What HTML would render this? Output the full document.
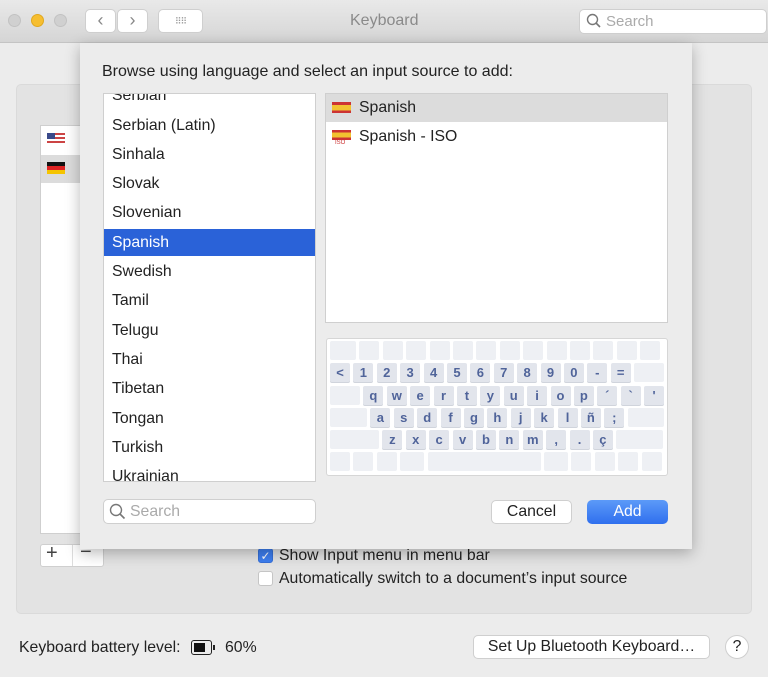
<!DOCTYPE html>
<html><head><meta charset="utf-8"><style>
*{box-sizing:border-box;margin:0;padding:0}
body{width:768px;height:677px;background:#ececec;font-family:"Liberation Sans",sans-serif;position:relative;overflow:hidden;color:#222}
.abs{position:absolute}
.tb{left:0;top:0;width:768px;height:43px;background:linear-gradient(#e9e9e9,#d5d5d5);border-bottom:1px solid #c4c4c4}
.dot{width:13px;height:13px;border-radius:50%;top:14px;background:#d0d0d0;border:1px solid #c2c2c2}
.btn{background:#fff;border:1px solid #cfcfcf;border-radius:5px}
.panel{left:16px;top:84px;width:736px;height:530px;background:#e3e3e3;border-radius:5px;border:1px solid #dadada}
.sheet{left:80px;top:43px;width:612px;height:506px;background:#ececec;box-shadow:0 4px 14px rgba(0,0,0,.28)}
.list{background:#fff;border:1px solid #cfcfcf}
.row{position:absolute;left:0;width:100%;height:27px;line-height:27px;font-size:15.8px;padding-left:8px}
.kb{left:326px;top:338px;width:342px;height:138px;background:#fff;border:1px solid #d6d6d6;border-radius:3px;padding:2px 3px}
.kr{display:flex;gap:3.4px;height:19px;margin-bottom:3.3px}
.k{width:20px;height:19px;background:#eef0f4;border-radius:2px;font-size:13px;font-weight:bold;color:#50649a;text-align:center;line-height:19px}
.k.f{background:#e2e5ec;box-shadow:0 1px 0 #d0d4dc}
.cb{width:15px;height:15px;border-radius:3px;background:#fff;border:1px solid #c5c5c5}
.t{font-size:15.8px}
</style></head><body>
<div class="abs tb"></div>
<div class="abs dot" style="left:8px"></div>
<div class="abs dot" style="left:31px;background:#f6be30;border-color:#e0a820"></div>
<div class="abs dot" style="left:54px"></div>
<div class="abs btn" style="left:85px;top:9px;width:31px;height:24px;color:#888;font-size:18px;text-align:center;line-height:21px">&#x2039;</div>
<div class="abs btn" style="left:117px;top:9px;width:31px;height:24px;color:#888;font-size:18px;text-align:center;line-height:21px">&#x203A;</div>
<div class="abs btn" style="left:158px;top:9px;width:45px;height:24px;color:#999;font-size:9px;text-align:center;line-height:22px;letter-spacing:-1px">⠿⠿</div>
<div class="abs" style="left:350px;top:12px;font-size:16px;color:#8a8a8a">Keyboard</div>
<div class="abs btn" style="left:579px;top:9px;width:188px;height:25px;color:#aaa;font-size:15px;line-height:23px;padding-left:26px">Search</div>
<svg class="abs" style="left:586px;top:13px" width="16" height="16"><circle cx="6.5" cy="6.5" r="5" fill="none" stroke="#777" stroke-width="1.4"/><path d="M10 10l4 4" stroke="#777" stroke-width="1.6"/></svg>

<div class="abs panel"></div>
<div class="abs list" style="left:40px;top:125px;width:457px;height:409px"></div>
<div class="abs" style="left:41px;top:155px;width:455px;height:28px;background:#dcdcdc"></div>
<div class="abs" style="left:47px;top:133px;width:18px;height:12px;background:repeating-linear-gradient(#c44 0 2px,#fff 2px 4px)"><div style="width:8px;height:6px;background:#3a4a8a"></div></div>
<div class="abs" style="left:47px;top:162px;width:18px;height:12px;background:linear-gradient(#111 0 33%,#d22 33% 66%,#f5c400 66%)"></div>

<div class="abs btn" style="left:40px;top:544px;width:64px;height:23px;border-radius:3px"></div>
<div class="abs" style="left:72px;top:545px;width:1px;height:21px;background:#ddd"></div>
<div class="abs" style="left:46px;top:542px;font-size:20px;color:#444">+</div>
<div class="abs" style="left:80px;top:541px;font-size:20px;color:#444">−</div>

<div class="abs cb" style="left:258px;top:548px;background:#3d7ef0;border-color:#3670d8;color:#fff;font-size:12px;text-align:center;line-height:14px">✓</div>
<div class="abs t" style="left:279px;top:547px">Show Input menu in menu bar</div>
<div class="abs cb" style="left:258px;top:571px"></div>
<div class="abs t" style="left:279px;top:570px">Automatically switch to a document’s input source</div>

<div class="abs t" style="left:19px;top:639px">Keyboard battery level:</div>
<div class="abs" style="left:191px;top:640px;width:21px;height:15px;border:1.5px solid #222;border-radius:3px;padding:2px"><div style="width:11px;height:100%;background:#111"></div></div>
<div class="abs" style="left:213px;top:645px;width:2px;height:5px;background:#222"></div>
<div class="abs t" style="left:225px;top:639px">60%</div>
<div class="abs btn t" style="left:473px;top:635px;width:237px;height:24px;text-align:center;line-height:22px">Set Up Bluetooth Keyboard…</div>
<div class="abs btn t" style="left:725px;top:635px;width:24px;height:24px;border-radius:50%;text-align:center;line-height:22px">?</div>

<div class="abs sheet"></div>
<div class="abs" style="left:102px;top:63px;font-size:16px">Browse using language and select an input source to add:</div>
<div class="abs list" style="left:103px;top:93px;width:213px;height:389px;overflow:hidden">
<div class="row" style="top:-12px">Serbian</div>
<div class="row" style="top:18px">Serbian (Latin)</div>
<div class="row" style="top:47px">Sinhala</div>
<div class="row" style="top:76px">Slovak</div>
<div class="row" style="top:105px">Slovenian</div>
<div class="row" style="top:135px;background:#2a62d8;color:#fff">Spanish</div>
<div class="row" style="top:164px">Swedish</div>
<div class="row" style="top:193px">Tamil</div>
<div class="row" style="top:223px">Telugu</div>
<div class="row" style="top:252px">Thai</div>
<div class="row" style="top:281px">Tibetan</div>
<div class="row" style="top:311px">Tongan</div>
<div class="row" style="top:340px">Turkish</div>
<div class="row" style="top:369px">Ukrainian</div>
</div>
<div class="abs list" style="left:325px;top:93px;width:343px;height:230px;overflow:hidden">
<div class="row" style="top:0;height:28px;background:#dcdcdc;padding-left:33px">Spanish</div>
<div class="row" style="top:29px;padding-left:33px">Spanish - ISO</div>
</div>
<div class="abs" style="left:332px;top:102px;width:19px;height:11px;background:linear-gradient(#c33 0 25%,#f2c230 25% 75%,#c33 75%)"></div>
<div class="abs" style="left:332px;top:130px;width:19px;height:10px;background:linear-gradient(#c33 0 25%,#f2c230 25% 75%,#c33 75%)"></div>
<div class="abs" style="left:335px;top:140px;font-size:6px;color:#c33">ISO</div>

<div class="abs kb">
<div class="kr"><div class="k" style="width:26px"></div><div class="k"></div><div class="k"></div><div class="k"></div><div class="k"></div><div class="k"></div><div class="k"></div><div class="k"></div><div class="k"></div><div class="k"></div><div class="k"></div><div class="k"></div><div class="k"></div><div class="k" style="width:20px"></div></div>
<div class="kr"><div class="k f">&lt;</div><div class="k f">1</div><div class="k f">2</div><div class="k f">3</div><div class="k f">4</div><div class="k f">5</div><div class="k f">6</div><div class="k f">7</div><div class="k f">8</div><div class="k f">9</div><div class="k f">0</div><div class="k f">-</div><div class="k f">=</div><div class="k" style="width:30px"></div></div>
<div class="kr"><div class="k" style="width:30px"></div><div class="k f">q</div><div class="k f">w</div><div class="k f">e</div><div class="k f">r</div><div class="k f">t</div><div class="k f">y</div><div class="k f">u</div><div class="k f">i</div><div class="k f">o</div><div class="k f">p</div><div class="k f">´</div><div class="k f">`</div><div class="k f">'</div></div>
<div class="kr"><div class="k" style="width:37px"></div><div class="k f">a</div><div class="k f">s</div><div class="k f">d</div><div class="k f">f</div><div class="k f">g</div><div class="k f">h</div><div class="k f">j</div><div class="k f">k</div><div class="k f">l</div><div class="k f">ñ</div><div class="k f">;</div><div class="k" style="width:36px"></div></div>
<div class="kr"><div class="k" style="width:49px"></div><div class="k f">z</div><div class="k f">x</div><div class="k f">c</div><div class="k f">v</div><div class="k f">b</div><div class="k f">n</div><div class="k f">m</div><div class="k f">,</div><div class="k f">.</div><div class="k f">ç</div><div class="k" style="width:47px"></div></div>
<div class="kr"><div class="k"></div><div class="k"></div><div class="k"></div><div class="k" style="width:24px"></div><div class="k" style="width:113px"></div><div class="k" style="width:24px"></div><div class="k"></div><div class="k"></div><div class="k"></div><div class="k"></div></div>
</div>

<div class="abs btn" style="left:103px;top:499px;width:213px;height:25px;font-size:15.8px;color:#aaa;line-height:23px;padding-left:26px">Search</div>
<svg class="abs" style="left:109px;top:503px" width="17" height="17"><circle cx="7" cy="7" r="5.5" fill="none" stroke="#777" stroke-width="1.4"/><path d="M11 11l4.5 4.5" stroke="#777" stroke-width="1.6"/></svg>
<div class="abs btn t" style="left:491px;top:500px;width:81px;height:24px;text-align:center;line-height:22px">Cancel</div>
<div class="abs t" style="left:587px;top:500px;width:81px;height:24px;border-radius:5px;background:linear-gradient(#5c9af8,#2f6fee);color:#fff;text-align:center;line-height:24px">Add</div>
</body></html>
